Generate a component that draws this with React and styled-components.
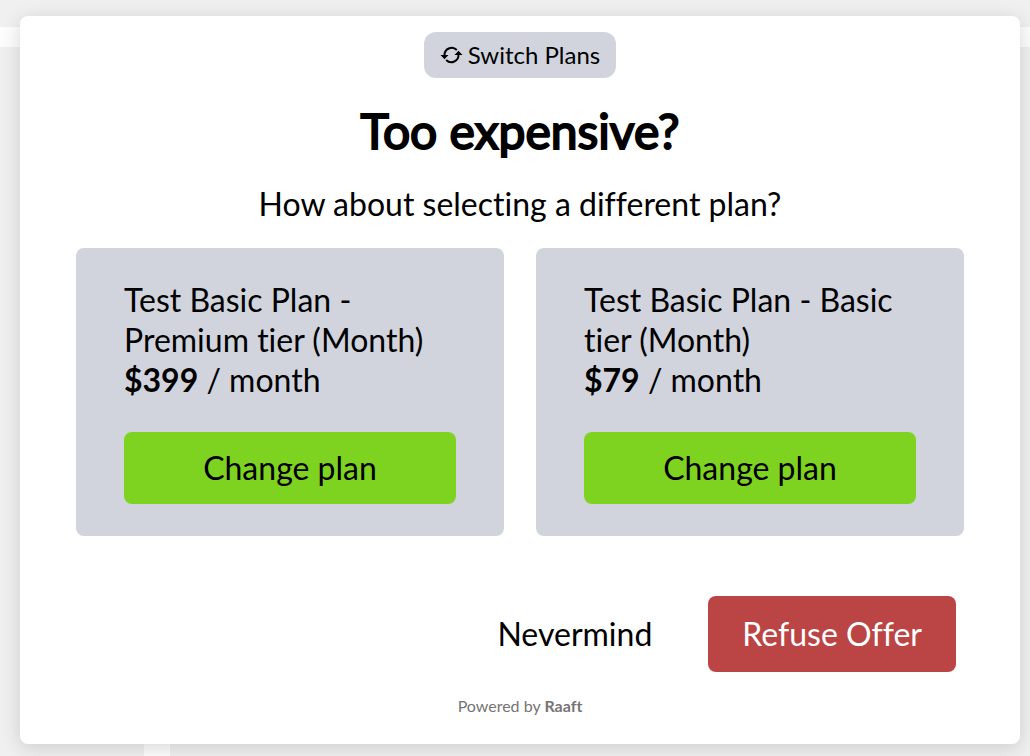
import styled, { createGlobalStyle } from "styled-components";

const GlobalStyle = createGlobalStyle`
  * {
    box-sizing: border-box;
  }

  body {
    margin: 0;
    background-color: #f0f0f0;
    color: #000;
    font-family: "Lato", sans-serif;
    font-variant-ligatures: none;
  }

  button {
    border: none;
    font-family: inherit;
    font-variant-ligatures: inherit;
    cursor: pointer;
  }
`;

const Page = styled.div`
  position: relative;
  min-height: 100vh;
  padding: 16px 10px 12px 20px;
`;

const BackdropBar = styled.div`
  position: absolute;
  top: 27px;
  left: 0;
  right: 0;
  height: 20px;
  background-color: #fdfdfd;
`;

const BackdropColumn = styled.div`
  position: absolute;
  top: 47px;
  bottom: 0;
  left: 14%;
  width: 26px;
  background-color: #fdfdfd;
`;

const Modal = styled.main`
  position: relative;
  display: flex;
  flex-direction: column;
  align-items: center;
  padding: 16px 56px 28px;
  border-radius: 8px;
  background-color: #fff;
  box-shadow: 0 4px 20px rgba(0, 0, 0, 0.15);
`;

const Badge = styled.div`
  display: flex;
  align-items: center;
  gap: 4px;
  padding: 5px 16px;
  border-radius: 12px;
  background-color: #d1d4dc;
  font-size: 24px;
  line-height: 36px;
`;

const BadgeIcon = styled.svg`
  width: 24px;
  height: 24px;
`;

const Title = styled.h1`
  margin: 24px 0 0;
  font-size: 48px;
  font-weight: 400;
  line-height: 58px;
  -webkit-text-stroke: 2px currentColor;
`;

const Subtitle = styled.p`
  margin: 24px 0;
  font-size: 32px;
  line-height: 40px;
`;

const Plans = styled.div`
  display: grid;
  grid-template-columns: 1fr 1fr;
  gap: 32px;
  width: 100%;
`;

const Plan = styled.section`
  display: flex;
  flex-direction: column;
  padding: 32px 48px;
  border-radius: 8px;
  background-color: #d1d4dc;
`;

const PlanText = styled.p`
  margin: 0;
  font-size: 32px;
  line-height: 40px;
`;

const PlanButton = styled.button`
  margin-top: 32px;
  padding: 16px;
  border-radius: 8px;
  background-color: #7ed321;
  color: #000;
  font-size: 32px;
  line-height: 40px;
`;

const Actions = styled.div`
  display: flex;
  align-self: stretch;
  justify-content: flex-end;
  gap: 24px;
  margin-top: 60px;
  padding: 0 8px;
`;

const ActionButton = styled.button`
  padding: 18px ${(props) => (props.$filled ? "34px" : "32px")};
  border-radius: 8px;
  background-color: ${(props) => (props.$filled ? "#bb4444" : "transparent")};
  color: ${(props) => (props.$filled ? "#fff" : "#000")};
  font-size: 32px;
  line-height: 40px;
`;

const Powered = styled.p`
  margin: 24px 0 0;
  color: #757575;
  font-size: 16px;
  line-height: 20px;
`;

const plans = [
  { id: 1, name: "Test Basic Plan - Premium tier (Month)", price: "$399" },
  { id: 2, name: "Test Basic Plan - Basic tier (Month)", price: "$79" },
];

const SwitchIcon = () => (
  <BadgeIcon viewBox="0 0 24 24" aria-hidden="true">
    <path
      d="M4.500 12.500A7.200 7.200 0 0 1 16.800 7M18.500 11.500A7.200 7.200 0 0 1 6.200 17"
      fill="none"
      stroke="currentColor"
      strokeWidth="2"
    />
    <path d="M.500 12h8L4.500 16.200zM14.500 12h8L18.500 7.800z" fill="currentColor" />
  </BadgeIcon>
);

const App = () => {
  return (
    <Page>
      <GlobalStyle />
      <BackdropBar />
      <BackdropColumn />
      <Modal>
        <Badge>
          <SwitchIcon />
          Switch Plans
        </Badge>
        <Title>Too expensive?</Title>
        <Subtitle>How about selecting a different plan?</Subtitle>
        <Plans>
          {plans.map((plan) => (
            <Plan key={plan.id}>
              <PlanText>{plan.name}</PlanText>
              <PlanText>
                <b>{plan.price}</b> / month
              </PlanText>
              <PlanButton type="button">Change plan</PlanButton>
            </Plan>
          ))}
        </Plans>
        <Actions>
          <ActionButton type="button">Nevermind</ActionButton>
          <ActionButton type="button" $filled>
            Refuse Offer
          </ActionButton>
        </Actions>
        <Powered>
          Powered by <b>Raaft</b>
        </Powered>
      </Modal>
    </Page>
  );
};

export default App;
